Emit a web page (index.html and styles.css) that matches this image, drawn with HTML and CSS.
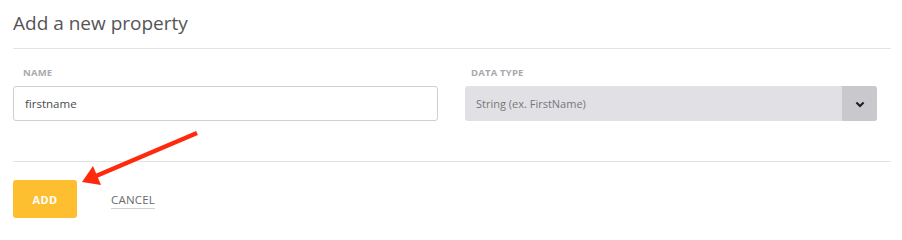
FILE: index.html
```html
<!DOCTYPE html>
<html>
<head>
<meta charset="utf-8">
<link rel="stylesheet" href="styles.css">
</head>
<body>
<div class="panel">
  <div class="header"><h1 class="title">Add a new property</h1></div>
  <div class="fields">
    <div class="field">
      <div class="label label-name">NAME</div>
      <div class="input">firstname</div>
    </div>
    <div class="field">
      <div class="label label-type">DATA TYPE</div>
      <div class="select">
        <span class="select-text">String (ex. FirstName)</span>
        <span class="select-btn">
          <svg width="10" height="7" viewBox="0 0 10 7"><path d="M1.4 1.6 L5 5 L8.6 1.6" fill="none" stroke="#1e1e22" stroke-width="2"/></svg>
        </span>
      </div>
    </div>
  </div>
  <div class="actions">
    <button class="btn-add">ADD</button>
    <span class="cancel">CANCEL</span>
  </div>
</div>
<svg class="arrow" width="902" height="232" viewBox="0 0 902 232">
  <line x1="197" y1="133" x2="96" y2="176" stroke="#ff2a0c" stroke-width="4.5" stroke-linecap="butt"/>
  <polygon points="82,182 93,166 101,185" fill="#ff2a0c"/>
</svg>
</body>
</html>
```
FILE: styles.css
```css
html, body {
  margin: 0;
  padding: 0;
  background: #ffffff;
  font-family: "Open Sans", "Noto Sans", sans-serif;
}
.panel {
  margin: 0 11px 0 13px;
}
.header {
  padding-top: 11px;
  padding-bottom: 13px;
  border-bottom: 1px solid #e3e3e6;
}
.title {
  margin: 0;
  font-size: 19px;
  line-height: 24px;
  font-weight: 400;
  color: #555558;
}
.fields {
  display: grid;
  grid-template-columns: 425px 412px;
  column-gap: 27px;
  padding-top: 18px;
  padding-bottom: 40px;
  border-bottom: 1px solid #e3e3e6;
}
.label {
  font-size: 9.5px;
  line-height: 12px;
  font-weight: 700;
  color: #a9a9ae;
  letter-spacing: 0.2px;
  margin-bottom: 7px;
}
.label-name { padding-left: 10px; }
.label-type { padding-left: 6px; }
.input {
  box-sizing: border-box;
  height: 35px;
  border: 1px solid #cfcfd3;
  border-radius: 3px;
  padding-left: 11px;
  font-size: 11.5px;
  line-height: 33px;
  color: #4a4a4d;
}
.select {
  display: flex;
  height: 35px;
  background: #e1e1e5;
  border-radius: 3px;
  overflow: hidden;
}
.select-text {
  flex: 1;
  padding-left: 11px;
  font-size: 11px;
  line-height: 35px;
  color: #76767a;
}
.select-btn {
  width: 35px;
  background: #c9c9cd;
  display: flex;
  align-items: center;
  justify-content: center;
}
.select-btn svg { display: block; margin-top: 1px; }
.actions {
  display: flex;
  align-items: center;
  gap: 34px;
  padding-top: 18px;
}
.btn-add {
  width: 64px;
  height: 38px;
  border: none;
  border-radius: 3px;
  background: #fdbe2f;
  color: #ffffff;
  font-family: inherit;
  font-size: 11px;
  font-weight: 700;
  padding: 0;
  letter-spacing: 0.3px;
}
.cancel {
  font-size: 11.5px;
  color: #6a6a6e;
  line-height: 14px;
  border-bottom: 1px solid #d0d0d4;
  padding-bottom: 1px;
  margin-top: 4px;
  letter-spacing: 0.2px;
}
.arrow {
  position: absolute;
  left: 0;
  top: 0;
  pointer-events: none;
}
```
